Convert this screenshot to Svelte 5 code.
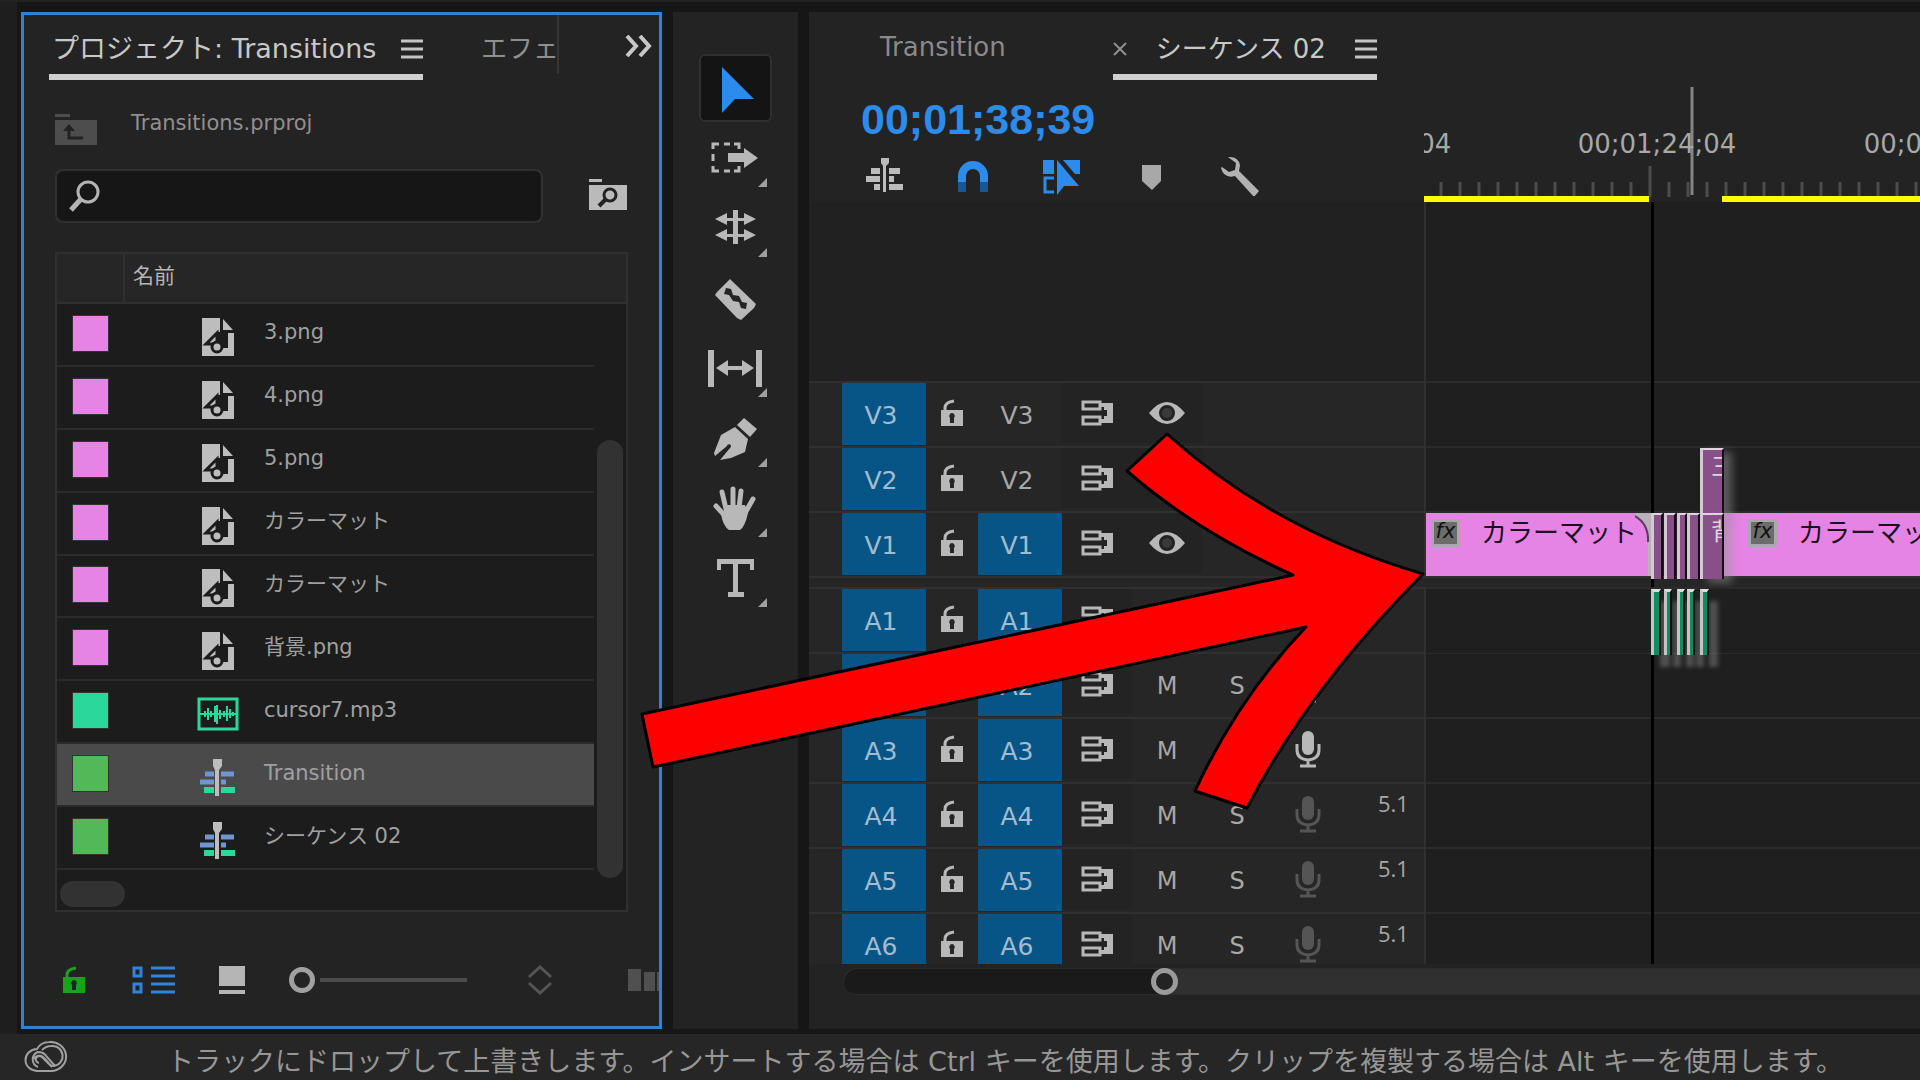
<script lang="ts">
	type Clip = { kind: string; start: number; width: number; name?: string; fx?: boolean; shade?: boolean; fade?: boolean };
	type Track = { id: string; kind: 'video' | 'audio'; target?: boolean; mic?: 'on' | 'off'; format?: string; clips: Clip[] };

	const items = [
		{ name: '3.png', type: 'image', label: 'pink' },
		{ name: '4.png', type: 'image', label: 'pink' },
		{ name: '5.png', type: 'image', label: 'pink' },
		{ name: 'カラーマット', type: 'image', label: 'pink' },
		{ name: 'カラーマット', type: 'image', label: 'pink' },
		{ name: '背景.png', type: 'image', label: 'pink' },
		{ name: 'cursor7.mp3', type: 'audio', label: 'mint' },
		{ name: 'Transition', type: 'sequence', label: 'green' },
		{ name: 'シーケンス 02', type: 'sequence', label: 'green' }
	];

	const tools = [
		{ id: 'select', title: '選択ツール', more: false },
		{ id: 'track', title: 'トラックの前方選択ツール', more: true },
		{ id: 'ripple', title: 'リップルツール', more: true },
		{ id: 'razor', title: 'レーザーツール', more: false },
		{ id: 'slip', title: 'スリップツール', more: true },
		{ id: 'pen', title: 'ペンツール', more: true },
		{ id: 'hand', title: '手のひらツール', more: true },
		{ id: 'type', title: '文字ツール', more: true }
	];

	const slivers: Clip[] = [
		{ kind: 'sliver', start: 225, width: 12 },
		{ kind: 'sliver', start: 238, width: 12 },
		{ kind: 'sliver', start: 251, width: 10 },
		{ kind: 'sliver', start: 261, width: 13 },
		{ kind: 'sliver', start: 274, width: 24, name: '背', shade: true }
	];

	const tracks: Track[] = [
		{ id: 'V3', kind: 'video', clips: [] },
		{ id: 'V2', kind: 'video', clips: [{ kind: 'sliver', start: 274, width: 24, name: '三', shade: true }] },
		{
			id: 'V1',
			kind: 'video',
			target: true,
			clips: [
				{ kind: 'matte', start: 0, width: 225, name: 'カラーマット', fx: true, fade: true },
				{ kind: 'matte', start: 298, width: 400, name: 'カラーマット', fx: true },
				...slivers
			]
		},
		{
			id: 'A1',
			kind: 'audio',
			target: true,
			mic: 'on',
			clips: [
				{ kind: 'sound', start: 225, width: 10 },
				{ kind: 'sound', start: 238, width: 8 },
				{ kind: 'sound', start: 251, width: 8 },
				{ kind: 'sound', start: 261, width: 8 },
				{ kind: 'sound', start: 274, width: 9 }
			]
		},
		{ id: 'A2', kind: 'audio', target: true, mic: 'on', clips: [] },
		{ id: 'A3', kind: 'audio', target: true, mic: 'on', clips: [] },
		{ id: 'A4', kind: 'audio', target: true, mic: 'off', format: '5.1', clips: [] },
		{ id: 'A5', kind: 'audio', target: true, mic: 'off', format: '5.1', clips: [] },
		{ id: 'A6', kind: 'audio', target: true, mic: 'off', format: '5.1', clips: [] }
	];

	const ticks = Array.from({ length: 80 }, (_, i) => i - 11);
	const marks = [
		{ at: -59, text: '00;01;19;04' },
		{ at: 226, text: '00;01;24;04' },
		{ at: 512, text: '00;01;29;04' }
	];

	let selected = $state(7);
	let tool = $state('select');
	let query = $state('');
	let zoom = $state(0);
</script>

{#snippet lock()}
	<svg width="24" height="28" viewBox="0 0 24 28" aria-hidden="true">
		<path d="M5 14V9q0-6 9-7" fill="none" stroke="currentColor" stroke-width="3" />
		<path fill="currentColor" fill-rule="evenodd" d="M1 11h22v16H1zM12 14a3 3 0 0 0-2 5v5h4v-5a3 3 0 0 0-2-5z" />
	</svg>
{/snippet}

{#snippet mic()}
	<svg width="28" height="38" viewBox="0 0 28 38" aria-hidden="true">
		<rect x="8" y="1" width="12" height="24" rx="6" fill="currentColor" />
		<path d="M3 14v6q0 9 11 10q11-1 11-10v-6M14 30v6M6 36h16" fill="none" stroke="currentColor" stroke-width="3" />
	</svg>
{/snippet}

{#snippet menu()}
	<svg width="22" height="20" viewBox="0 0 22 20" aria-hidden="true">
		<path d="M0 2h22M0 10h22M0 18h22" stroke="#c4c4c4" stroke-width="3" />
	</svg>
{/snippet}

<div class="app">
	<div class="workspace">
		<section class="project">
			<header class="tabs">
				<button class="tab active">プロジェクト: Transitions {@render menu()}</button>
				<button class="tab clipped">エフェ</button>
				<button class="overflow" aria-label="その他のパネル">
					<svg width="28" height="22" viewBox="0 0 28 22"><path d="M2 1l9 10-9 10M15 1l9 10-9 10" fill="none" stroke="#c8c8c8" stroke-width="4" /></svg>
				</button>
			</header>

			<div class="crumb">
				<svg width="42" height="31" viewBox="0 0 42 31" aria-hidden="true">
					<path d="M0 0h15v3H0zM0 6h42v25H0z" fill="#4d4d4d" />
					<path d="M14 14v10h14" fill="none" stroke="#222" stroke-width="3" />
					<path d="M8 17l6-7 6 7z" fill="#222" />
				</svg>
				<span>Transitions.prproj</span>
			</div>

			<div class="search-row">
				<label class="search">
					<svg width="32" height="32" viewBox="0 0 32 32" aria-hidden="true">
						<ellipse cx="19" cy="12" rx="10" ry="10" fill="none" stroke="#b4b4b4" stroke-width="3" />
						<path d="M12 19L2 30" stroke="#b4b4b4" stroke-width="5" />
					</svg>
					<input type="text" aria-label="検索" bind:value={query} />
				</label>
				<button aria-label="検索ビン">
					<svg width="38" height="31" viewBox="0 0 38 31">
						<path d="M0 0h13v3H0zM0 6h38v25H0z" fill="#bababa" />
						<circle cx="21" cy="16" r="6" fill="none" stroke="#222" stroke-width="3" />
						<path d="M17 20l-7 7" stroke="#222" stroke-width="4" />
					</svg>
				</button>
			</div>

			<div class="list">
				<table>
					<colgroup>
						<col class="w-label" />
						<col class="w-icon" />
						<col />
						<col class="w-pad" />
					</colgroup>
					<thead>
						<tr><th class="col-label" aria-label="ラベル"></th><th class="col-name" colspan="3">名前</th></tr>
					</thead>
					<tbody>
						{#each items as item, i}
							<tr class:selected={i === selected} onclick={() => (selected = i)}>
								<td class="cell-label"><span class="swatch {item.label}"></span></td>
								<td class="cell-icon">
									{#if item.type === 'image'}
										<svg width="42" height="38" viewBox="0 0 42 38">
											<path d="M5 0h18v15h14v23H5z" fill="#bdbdbd" />
											<path d="M26 1v11h10z" fill="#bdbdbd" />
											<path d="M19 14h12v16h-8z" fill="#1c1c1c" />
											<path d="M20 15L9 26h11z" fill="#bdbdbd" stroke="#1c1c1c" stroke-width="3" />
											<circle cx="20" cy="29" r="5" fill="#bdbdbd" stroke="#1c1c1c" stroke-width="3" />
										</svg>
									{:else if item.type === 'audio'}
										<svg width="42" height="34" viewBox="0 0 42 34">
											<rect x="2" y="2" width="38" height="30" fill="none" stroke="#2bd79a" stroke-width="3" />
											<path d="M3 17h36M8 14v6M11 11v12M14 14v6M18 9v16M20 8v19M23 13v9M27 14v6M30 9v15M33 12v9M36 15v4" stroke="#2bd79a" stroke-width="2" />
										</svg>
									{:else}
										<svg width="42" height="38" viewBox="0 0 42 38">
											<path d="M8 16h9M24 16h13M3 24h14M24 24h5" stroke="#6f96cf" stroke-width="5" />
											<path d="M7 32h10M24 32h14" stroke="#2bd79a" stroke-width="6" />
											<path d="M16 1h9v7l-3 4v26h-4V12l-2-4z" fill="#bdbdbd" />
										</svg>
									{/if}
								</td>
								<td class="cell-name">{item.name}</td>
								<td class="cell-pad"></td>
							</tr>
						{/each}
					</tbody>
				</table>
				<div class="thumb-v"></div>
				<div class="thumb-h"></div>
			</div>

			<footer class="view-bar">
				<button class="writable" aria-label="書き込み可能">{@render lock()}</button>
				<button class="as-list" aria-label="リスト表示">
					<svg width="43" height="28" viewBox="0 0 43 28">
						<path d="M2 2h7v8H2zM2 18h7v8H2zM19 2h24M19 10h24M19 18h24M19 26h24" fill="none" stroke="#2f84dc" stroke-width="3" />
					</svg>
				</button>
				<button class="as-icons" aria-label="アイコン表示">
					<svg width="26" height="28" viewBox="0 0 26 28"><path d="M0 0h26v20H0zM0 24h26v4H0z" fill="#b5b5b5" /></svg>
				</button>
				<input class="size" type="range" min="0" max="100" aria-label="サイズ" bind:value={zoom} />
				<button class="sort" aria-label="並べ替え">
					<svg width="26" height="30" viewBox="0 0 26 30"><path d="M2 12L13 2l11 10M2 18l11 10 11-10" fill="none" stroke="#555" stroke-width="3" /></svg>
				</button>
				<svg class="automate" width="31" height="22" viewBox="0 0 31 22" aria-hidden="true"><path d="M0 0h13v22H0zM16 3h11v19H16zM29 3h2v19h-2z" fill="#505050" /></svg>
			</footer>
		</section>

		<nav class="tools">
			{#each tools as t}
				<button class:on={t.id === tool} aria-label={t.title} onclick={() => (tool = t.id)}>
					<svg width="73" height="68" viewBox="0 0 73 68" fill="#b8b8b8" stroke="#b8b8b8" stroke-width="0">
						{#if t.id === 'select'}
							<path d="M23 13v46l13-14h19z" fill="#2d8ceb" />
						{:else if t.id === 'track'}
							<path d="M14 25v-5h6M25 20h6M35 20h5v5M14 30v7M14 42v5h6M25 47h6M35 47h5v-5" fill="none" stroke-width="3" />
							<path d="M29 29h16v-5l14 10-14 10v-6H29z" />
						{:else if t.id === 'ripple'}
							<path d="M34 16h5v34h-5zM16 25l12-6v5h17v-5l12 6-12 6v-4H28v4zM16 41l12-6v5h17v-5l12 6-12 6v-4H28v4z" />
						{:else if t.id === 'razor'}
							<path fill-rule="evenodd" d="M31 15l3 3 23 22-2 4-13 12-4-2-22-23 2-3zM27 24l-2 6 5 1 4 6 6 1 2 6 5 1 1-6-5-1-3-6-6-1-2-6z" />
						{:else if t.id === 'slip'}
							<path d="M9 16h6v37H9zM57 16h6v37h-6zM17 34l12-8v6h14v-6l12 8-12 8v-6H29v6z" />
						{:else if t.id === 'pen'}
							<path d="M45 14l13 11-7 8-13-12z" />
							<path d="M36 23l13 12-3 13-14 6-11 2 10-12a2 2 0 1 0-3-2L16 52l-1-3 7-18z" />
						{:else if t.id === 'hand'}
							<path d="M34 34V15M27 35l-4-17M40 34l2-17M46 39l8-14M28 44L17 32" fill="none" stroke-width="5" stroke-linecap="round" />
							<path d="M26 31h20l3 8q-3 14-8 17H30q-6-4-8-16l3-3z" />
						{:else}
							<path d="M18 15h37v11h-4v-6H39v28h6v5H29v-5h5V20H22v6h-4z" />
						{/if}
						{#if t.more}<path d="M68 54v9h-9z" fill="#a0a0a0" />{/if}
					</svg>
				</button>
			{/each}
		</nav>

		<section class="timeline">
			<header class="tabs">
				<button class="tab idle">Transition</button>
				<div class="tab active">
					<button class="close" aria-label="閉じる">
						<svg width="14" height="14" viewBox="0 0 14 14"><path d="M1 1l12 12M13 1L1 13" stroke="#909090" stroke-width="2" /></svg>
					</button>
					<span>シーケンス 02</span>
					{@render menu()}
				</div>
			</header>

			<div class="top">
				<div class="controls">
					<div class="timecode">00;01;38;39</div>
					<div class="options">
						<button aria-label="ネスト">
							<svg width="40" height="40" viewBox="0 0 40 40" fill="#bcbcbc">
								<path d="M17 2h8v5l-3 3v26h-3V10l-2-3zM7 12h9v6H7zM25 12h11v6H25zM2 20h14v6H2zM25 20h5v6h-5zM10 28h6v6h-6zM25 28h14v6H25z" />
							</svg>
						</button>
						<button aria-label="スナップ">
							<svg width="40" height="40" viewBox="0 0 40 40">
								<path d="M9 26v-6a11 11 0 0 1 22 0v6" fill="none" stroke="#2d8ceb" stroke-width="8" />
								<path d="M9 26v10M31 26v10" stroke="#1a5690" stroke-width="8" />
							</svg>
						</button>
						<button aria-label="リンクされた選択">
							<svg width="40" height="40" viewBox="0 0 40 40" fill="#2d8ceb">
								<path d="M1 4h11v14H1zM21 4h17v14h-5zM15 4v35l7-9h15z" />
								<path d="M12 22H3v14h9" fill="none" stroke="#2d8ceb" stroke-width="3" />
							</svg>
						</button>
						<button aria-label="マーカーを追加">
							<svg width="40" height="40" viewBox="0 0 40 40"><path d="M11 9h19v16l-9 9-10-9z" fill="#a8a8a8" /></svg>
						</button>
						<button aria-label="タイムライン表示設定">
							<svg width="40" height="40" viewBox="0 0 40 40"><path d="M8 1q10-1 12 8l-1 6 20 20-5 6-19-21q-11 3-14-8l1-1 7 5 6-2 1-7z" fill="#b2b2b2" /></svg>
						</button>
					</div>
				</div>
				<div class="ruler">
					<svg width="100%" height="122" aria-hidden="true">
						{#each ticks as n}
							<path d="M{226 + n * 19} {n % 15 === 0 ? 86 : 102}V117" stroke="#4d4d4d" stroke-width="3" />
						{/each}
						<path d="M0 119H225M298 119H2400" stroke="#fffb00" stroke-width="6" />
						<path d="M268 7V115" stroke="#858585" stroke-width="3" />
					</svg>
					{#each marks as m}
						<span class="mark" style="left: {m.at}px">{m.text}</span>
					{/each}
				</div>
			</div>

			<div class="tracks">
				<div class="row spacer"><div class="head"></div><div class="lane"></div></div>
				{#each tracks as track}
					<div class="row {track.kind}" class:first={track.id === 'A1'}>
						<div class="head">
							<button class="patch blue">{track.id}</button>
							<button class="cell grey" aria-label="トラックのロック">{@render lock()}</button>
							<button class="patch" class:blue={track.target}>{track.id}</button>
							<button class="cell dark grey" aria-label="同期ロック">
								<svg width="34" height="26" viewBox="0 0 34 26">
									<path d="M3 2h17v7H3zM3 17h17v7H3z" fill="none" stroke="currentColor" stroke-width="3" />
									<path d="M21 3h12v20H21v-4h3v-3h3v-6h-3V7h-3z" fill="currentColor" />
								</svg>
							</button>
							{#if track.kind === 'video'}
								<button class="cell dark grey" aria-label="トラック出力の切り替え">
									<svg width="36" height="24" viewBox="0 0 36 24">
										<path fill="currentColor" fill-rule="evenodd" d="M0 12Q18-10 36 12Q18 34 0 12zM18 4a8 8 0 1 0 0 16a8 8 0 1 0 0-16z" />
										<circle cx="18" cy="12" r="5" fill="#3a3a3a" />
									</svg>
								</button>
							{:else}
								<button class="cell letter">M</button>
								<button class="cell letter">S</button>
								<button class="cell" class:grey={track.mic === 'on'} class:dim={track.mic === 'off'} aria-label="録音">{@render mic()}</button>
								<span class="format">{track.format ?? ''}</span>
							{/if}
						</div>
						<div class="lane">
							{#each track.clips as clip}
								<div class="clip {clip.kind}" class:shade={clip.shade} class:butted={clip.start > 290} style="left: {clip.start}px; width: {clip.width}px">
									{#if clip.fx}<span class="fx">fx</span>{/if}
									{#if clip.name}<span class="clip-name">{clip.name}</span>{/if}
									{#if clip.fade}
										<svg class="fade" width="16" height="63" viewBox="0 0 16 63" aria-hidden="true">
											<path d="M0 3q14 8 13 26V63h3V0H0z" fill="#b9b0b9" />
											<path d="M0 3q14 8 13 26" fill="none" stroke="#5c3a5c" stroke-width="2" />
										</svg>
									{/if}
								</div>
							{/each}
						</div>
					</div>
				{/each}
				<div class="playhead"></div>
			</div>

			<div class="scroll"><span class="grip"></span></div>
		</section>
	</div>

	<footer class="status">
		<svg width="44" height="32" viewBox="0 0 44 32" fill="none" stroke="#a0a0a0" stroke-width="2" aria-hidden="true">
			<path d="M14 30a12 11 0 0 1-1-22Q17 1 25 1a15 14 0 0 1 3 29z" />
			<path d="M14 26a8 8 0 0 1 0-15q6 0 9 5l8 9M18 9q4-4 9-4a10 10 0 0 1 3 20q-4 0-7-4l-5-5q-5-3-8 2" />
			<path d="M15 22q-4-1-3-5 4-5 9 1l7 8" />
		</svg>
		<span>トラックにドロップして上書きします。インサートする場合は Ctrl キーを使用します。クリップを複製する場合は Alt キーを使用します。</span>
	</footer>

	<svg class="arrow" width="800" height="400" viewBox="630 420 800 400" aria-hidden="true">
		<path
			d="M1167 434Q1273 530 1423 574Q1309 688 1247 808L1195 791Q1238 698 1306 627L653 767L642 714L1293 575Q1197 532 1127 471Z"
			fill="#f00"
			stroke="#000"
			stroke-width="3"
			stroke-linejoin="round"
		/>
	</svg>
</div>

<style>
	:global(body) {
		background: #161616;
	}
	.app {
		position: relative;
		display: flex;
		flex-direction: column;
		height: 100vh;
		overflow: hidden;
		border-top: 2px solid #232323;
		box-sizing: border-box;
		font-family: 'DejaVu Sans', 'Noto Sans CJK JP', sans-serif;
		font-size: 26px;
		color: #a8a8a8;
	}
	button {
		padding: 0;
		border: 0;
		background: none;
		color: inherit;
		font: inherit;
	}
	svg {
		display: block;
		flex-shrink: 0;
	}
	.workspace {
		display: flex;
		flex: 1;
		min-height: 0;
		gap: 11px;
		padding: 10px 0 5px 4px;
		border-left: 17px solid #1e1e1e;
	}

	/* project panel */
	.project {
		display: flex;
		flex-direction: column;
		width: 635px;
		flex-shrink: 0;
		border: 3px solid #2f82d6;
		background: #232323;
	}
	.tabs {
		display: flex;
		align-items: flex-start;
	}
	.project .tabs {
		padding-left: 25px;
	}
	.tab {
		display: flex;
		align-items: center;
		justify-content: space-between;
		height: 65px;
		box-sizing: border-box;
		padding-top: 4px;
		white-space: nowrap;
		border-bottom: 6px solid transparent;
	}
	.tab.active {
		border-color: #cfcfcf;
		color: #c8c8c8;
	}
	.tab.active svg {
		margin-top: 4px;
	}
	.project .tab.active {
		width: 374px;
		padding-left: 3px;
		font-size: 27px;
	}
	.tab.clipped {
		width: 78px;
		height: 59px;
		margin-left: 58px;
		border-right: 2px solid #363636;
		border-bottom: 0;
		color: #8f8f8f;
		overflow: hidden;
	}
	.overflow {
		margin: 20px 6px 0 auto;
	}
	.crumb {
		display: flex;
		gap: 34px;
		padding: 34px 0 0 31px;
		font-size: 21px;
		line-height: 18px;
		color: #909090;
	}
	.search-row {
		display: flex;
		align-items: center;
		justify-content: space-between;
		padding: 24px 32px 0 31px;
	}
	.search-row button {
		margin-bottom: 4px;
	}
	.search {
		display: flex;
		align-items: center;
		width: 488px;
		height: 54px;
		box-sizing: border-box;
		padding: 0 12px;
		border: 2px solid #303030;
		border-radius: 8px;
		background: #161616;
	}
	.search input {
		flex: 1;
		border: 0;
		outline: 0;
		background: none;
		color: #c8c8c8;
		font-size: 21px;
	}
	.list {
		position: relative;
		height: 656px;
		margin: 29px 31px 0;
		border: 2px solid #303030;
		background: #1c1c1c;
	}
	table {
		width: 100%;
		height: 616px;
		border-spacing: 0;
		table-layout: fixed;
		font-size: 21px;
	}
	.w-label {
		width: 68px;
	}
	.w-icon {
		width: 137px;
	}
	.w-pad {
		width: 32px;
	}
	th {
		height: 48px;
		padding: 0;
		background: #262626;
		border-bottom: 2px solid #303030;
		font-weight: normal;
		text-align: left;
	}
	.col-label {
		border-right: 2px solid #303030;
	}
	.col-name {
		padding: 0 0 8px 8px;
		box-sizing: border-box;
		color: #b4b4b4;
	}
	td {
		height: 61px;
		box-sizing: border-box;
		padding: 0;
		border-bottom: 2px solid #2b2b2b;
		line-height: 24px;
	}
	.cell-label {
		padding: 0 0 2px 16px;
	}
	.cell-icon {
		padding: 5px 0 0 72px;
	}
	.cell-name {
		padding: 0 0 4px 2px;
		color: #a0a0a0;
	}
	.cell-pad {
		border: 0;
	}
	.selected td:not(.cell-pad) {
		background: #4a4a4a;
	}
	.swatch {
		display: block;
		width: 35px;
		height: 35px;
		outline: 1px solid #333;
	}
	.pink {
		background: #e684e6;
	}
	.mint {
		background: #2bd79a;
	}
	.green {
		background: #52b858;
	}
	.thumb-v {
		position: absolute;
		top: 186px;
		right: 3px;
		bottom: 32px;
		width: 26px;
		border-radius: 13px;
		background: #323232;
	}
	.thumb-h {
		position: absolute;
		left: 3px;
		bottom: 3px;
		width: 65px;
		height: 26px;
		border-radius: 13px;
		background: #323232;
	}
	.view-bar {
		display: flex;
		align-items: center;
		height: 30px;
		margin-top: 53px;
		padding-left: 38px;
		overflow: hidden;
	}
	.writable {
		color: #17a31b;
	}
	.as-list {
		margin-left: 46px;
	}
	.as-icons {
		margin-left: 44px;
	}
	.size {
		appearance: none;
		width: 178px;
		height: 26px;
		margin: 0 0 0 44px;
		background: linear-gradient(#4c4c4c, #4c4c4c) 31px 11px / 147px 4px no-repeat;
	}
	.size::-webkit-slider-thumb {
		appearance: none;
		width: 26px;
		height: 26px;
		box-sizing: border-box;
		border: 5px solid #a0a0a0;
		border-radius: 50%;
		background: #232323;
	}
	.sort {
		margin-left: 60px;
	}
	.automate {
		margin-left: auto;
	}

	/* tool bar */
	.tools {
		display: grid;
		grid-template-rows: repeat(8, 70px);
		justify-content: center;
		align-content: start;
		width: 125px;
		flex-shrink: 0;
		padding-top: 42px;
		background: #232323;
		box-sizing: border-box;
	}
	.tools button {
		height: 68px;
		border-radius: 6px;
	}
	.tools .on {
		background: #141414;
		outline: 2px solid #303030;
		outline-offset: -2px;
	}

	/* timeline */
	.timeline {
		display: flex;
		flex-direction: column;
		flex: 1;
		min-width: 0;
		background: #232323;
	}
	.timeline .tabs {
		padding: 3px 0 0 71px;
	}
	.idle {
		color: #8a8a8a;
	}
	.timeline .tab.active {
		justify-content: flex-start;
		width: 264px;
		margin-left: 107px;
	}
	.tab.active .close {
		margin-right: 29px;
	}
	.timeline .tab.active span {
		flex: 1;
	}
	.top {
		display: grid;
		grid-template-columns: 615px 1fr;
		height: 122px;
	}
	.timecode {
		padding: 15px 0 0 52px;
		font-family: 'Liberation Sans', Arial, sans-serif;
		font-size: 43px;
		font-weight: bold;
		line-height: 48px;
		color: #2d8ceb;
	}
	.options {
		display: flex;
		gap: 49px;
		padding: 13px 0 0 55px;
	}
	.ruler {
		position: relative;
		overflow: hidden;
	}
	.mark {
		position: absolute;
		top: 48px;
		width: 170px;
		margin-left: -78px;
		text-align: center;
		line-height: 32px;
	}
	.tracks {
		position: relative;
		flex: 1;
		min-height: 0;
		overflow: hidden;
	}
	.row {
		display: grid;
		grid-template-columns: 617px 1fr;
		height: 65px;
	}
	.row .head {
		display: grid;
		grid-template-columns: 84px 52px 84px 70px 70px 70px 72px 1fr;
		padding-left: 33px;
		border-top: 2px solid #303030;
		border-right: 2px solid #303030;
		background: #262626;
	}
	.lane {
		position: relative;
		border-top: 2px solid #2b2b2b;
		background: #1f1f1f;
	}
	.spacer {
		height: 179px;
	}
	.spacer .head {
		border-top: 0;
		background: #212121;
	}
	.spacer .lane {
		border-top: 0;
	}
	.row.first {
		height: 76px;
		background: #262626;
		box-shadow: inset 0 2px #303030;
	}
	.first .head,
	.first .lane {
		margin-top: 11px;
	}
	.patch {
		height: 62px;
		padding: 2px 6px 0 0;
		font-size: 25px;
	}
	.patch.blue {
		background: #075586;
		color: #a3bdd0;
	}
	.cell {
		display: flex;
		align-items: center;
		justify-content: center;
		height: 60px;
	}
	.cell.dark {
		background: #232323;
	}
	.grey {
		color: #b8b8b8;
	}
	.dim {
		color: #555;
	}
	.letter {
		height: 64px;
		font-size: 24px;
	}
	.format {
		padding: 5px 0 0 34px;
		font-family: 'Open Sans', sans-serif;
		font-size: 22px;
		line-height: 28px;
	}
	.clip {
		position: absolute;
		top: 0;
		height: 63px;
		box-sizing: border-box;
		overflow: hidden;
		white-space: nowrap;
	}
	.matte {
		display: flex;
		align-items: flex-start;
		gap: 21px;
		padding: 6px 0 0 5px;
		background: #e684e6;
		color: #1c101c;
	}
	.butted {
		padding-left: 24px;
	}
	.fade {
		position: absolute;
		top: 0;
		right: 0;
	}
	.fx {
		width: 23px;
		height: 22px;
		flex-shrink: 0;
		border: 3px solid #a9a9a9;
		background: #6c6c6c;
		font: italic 21px/18px 'DejaVu Sans', sans-serif;
		text-align: center;
		color: #111;
	}
	.matte .clip-name {
		line-height: 28px;
	}
	.sliver {
		height: 66px;
		z-index: 1;
		border-top: 2px solid #e0d4e0;
		border-left: 3px solid #d4c8d4;
		border-right: 2px solid #111;
		background: #894f88;
	}
	.sliver .clip-name {
		display: block;
		padding: 2px 0 0 8px;
		font-size: 24px;
		line-height: 30px;
		color: #e0d4e0;
	}
	.shade {
		box-shadow: 8px 4px 8px rgb(150 150 150 / 50%);
	}
	.sound {
		height: 66px;
		z-index: 1;
		border-top: 3px solid #ddd;
		border-left: 3px solid #c4c4c4;
		border-right: 2px solid #101010;
		background: #138a60;
		box-shadow: 9px 12px 4px rgb(130 130 130 / 50%);
	}
	.audio + .audio .lane {
		z-index: 0;
	}
	.first .lane {
		z-index: 1;
	}
	.playhead {
		position: absolute;
		top: 0;
		bottom: 0;
		left: 842px;
		width: 3px;
		background: #000;
	}
	.scroll {
		display: flex;
		height: 27px;
		margin: 4px 0 34px 34px;
		border-radius: 14px 0 0 14px;
		background: linear-gradient(90deg, #1a1a1a 320px, #303030 320px);
		box-shadow: inset 1px 1px #2c2c2c, inset 0 -1px #2c2c2c;
	}
	.grip {
		width: 27px;
		height: 27px;
		margin-left: 308px;
		box-sizing: border-box;
		border: 5px solid #9a9a9a;
		border-radius: 50%;
		background: #232323;
	}

	.status {
		display: flex;
		align-items: center;
		gap: 99px;
		height: 46px;
		padding-left: 24px;
		background: #262626;
		white-space: nowrap;
	}
	.status span {
		padding-top: 10px;
		font-size: 27px;
		line-height: 32px;
		color: #979797;
	}
	.arrow {
		position: absolute;
		top: 418px;
		left: 630px;
		z-index: 5;
	}
</style>
